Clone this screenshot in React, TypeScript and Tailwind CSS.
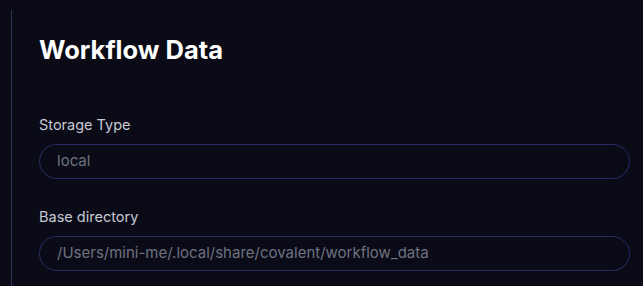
export default function App() {
  return (
    <div
      className="min-h-screen w-full bg-[#0a0b17] pt-[10px] pl-[11px]"
      style={{ fontFamily: 'Inter, "Noto Sans", sans-serif' }}
    >
      <div className="border-l border-[#303054] min-h-[276px] pl-[27px] pr-[13px] pt-[24px]">
        <h1 className="text-[25.5px] leading-[32px] font-bold text-white">Workflow Data</h1>

        <div className="mt-[49px]">
          <label className="block text-[14.5px] leading-[20px] text-[#c7c9d3]">Storage Type</label>
          <div className="mt-[9px] h-[35px] rounded-full border border-[#2b2a66] flex items-center px-[17px]">
            <span className="text-[15px] text-[#6f7282]">local</span>
          </div>
        </div>

        <div className="mt-[28px]">
          <label className="block text-[14.5px] leading-[20px] text-[#c7c9d3]">Base directory</label>
          <div className="mt-[9px] h-[35px] rounded-full border border-[#2b2a66] flex items-center px-[17px]">
            <span className="text-[15px] text-[#6f7282]">/Users/mini-me/.local/share/covalent/workflow_data</span>
          </div>
        </div>
      </div>
    </div>
  );
}
